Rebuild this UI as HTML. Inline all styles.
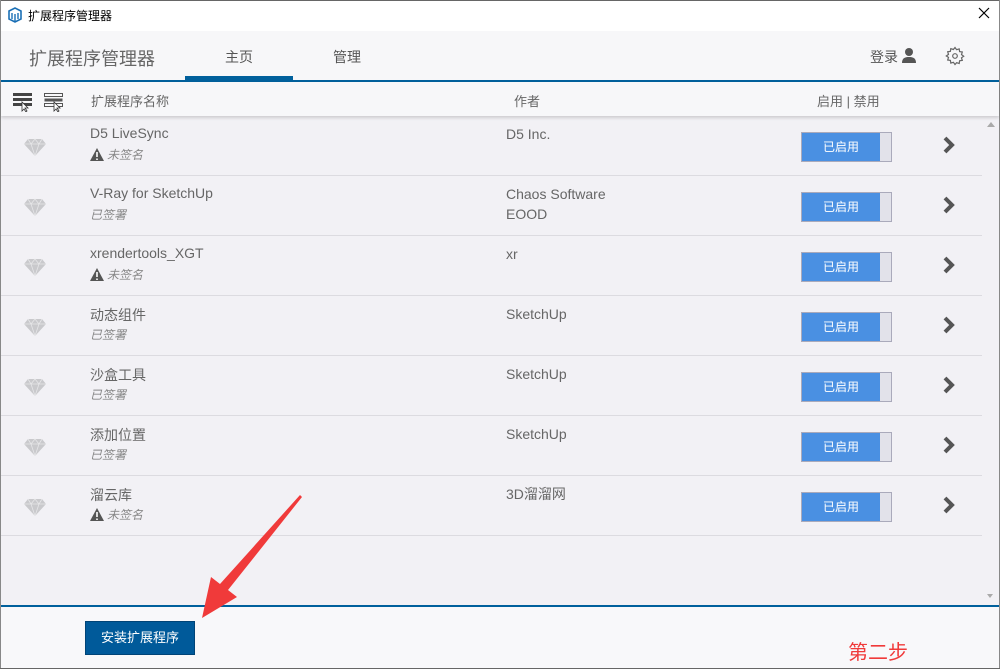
<!DOCTYPE html>
<html><head><meta charset="utf-8"><style>
*{margin:0;padding:0;box-sizing:border-box}
body{width:1000px;height:669px;overflow:hidden;font-family:"Liberation Sans","Noto Sans CJK SC",sans-serif;background:#fff;position:relative;color:#555}
.abs{position:absolute}
.row{position:absolute;left:1px;width:981px;height:60px;border-bottom:1px solid #dcdbe0}
.name{position:absolute;left:89px;top:9px;font-size:14px;color:#666}
.sub{position:absolute;left:89px;top:30px;font-size:12px;color:#888;font-style:italic}
.sub svg{vertical-align:-2px;margin-right:3px}
.auth{position:absolute;left:505px;top:8px;font-size:14px;color:#666;line-height:20px}
.tog{position:absolute;left:800px;top:16px;width:91px;height:30px;border:1px solid #aab;background:#e2e2ea}
.tog span{position:absolute;left:0;top:0;width:78px;height:28px;background:#4a90e2;color:#fff;font-size:12px;text-align:center;line-height:28px}
.gem{position:absolute;left:22px;top:22px}
.chev{position:absolute;left:941px;top:20px}
</style></head><body>
<div class="abs" style="left:0;top:0;width:1000px;height:1px;background:#666"></div>
<div class="abs" style="left:0;top:0;width:1px;height:669px;background:#888"></div>
<div class="abs" style="right:0;top:0;width:1px;height:669px;background:#888"></div>
<svg class="abs" style="left:7px;top:7px" width="16" height="16" viewBox="0 0 16 16"><path d="M2 4l6-3 6 3v8l-6 3-6-3z" fill="none" stroke="#1a6fb5" stroke-width="1.6"/><path d="M5 6v6M8 7v7M11 6v6" stroke="#1a6fb5" stroke-width="1.4"/></svg>
<div class="abs" style="left:28px;top:7px;font-size:12px;color:#000">扩展程序管理器</div>
<svg class="abs" style="left:978px;top:7px" width="12" height="12" viewBox="0 0 12 12"><path d="M1 1l10 10M11 1L1 11" stroke="#000" stroke-width="1.2"/></svg>
<div class="abs" style="left:1px;top:31px;width:998px;height:49px;background:#f7f7f9"></div>
<div class="abs" style="left:29px;top:45px;font-size:18px;color:#666">扩展程序管理器</div>
<div class="abs" style="left:225px;top:47px;font-size:14px;color:#555">主页</div>
<div class="abs" style="left:333px;top:47px;font-size:14px;color:#555">管理</div>
<div class="abs" style="left:185px;top:76px;width:108px;height:4px;background:#00609c"></div>
<div class="abs" style="left:870px;top:47px;font-size:14px;color:#555">登录</div>
<svg class="abs" style="left:901px;top:47px" width="16" height="16" viewBox="0 0 16 16"><circle cx="8" cy="5" r="4" fill="#555"/><path d="M1 16c0-5 3-6 7-6s7 1 7 6z" fill="#555"/></svg>
<svg class="abs" style="left:945px;top:46px" width="20" height="20" viewBox="0 0 20 20"><path d="M10 1.5l1.6 2.2 2.6-.8.4 2.7 2.7.4-.8 2.6 2.2 1.6-2.2 1.6.8 2.6-2.7.4-.4 2.7-2.6-.8L10 18.5l-1.6-2.2-2.6.8-.4-2.7-2.7-.4.8-2.6L1.3 10l2.2-1.6-.8-2.6 2.7-.4.4-2.7 2.6.8z" fill="none" stroke="#666" stroke-width="1.2"/><circle cx="10" cy="10" r="2.3" fill="none" stroke="#666" stroke-width="1.2"/></svg>
<div class="abs" style="left:1px;top:80px;width:998px;height:2px;background:#00609c"></div>
<div class="abs" style="left:1px;top:82px;width:998px;height:34px;background:#f7f7f9;box-shadow:0 2px 3px rgba(0,0,0,.15);z-index:2"></div>
<svg class="abs" style="left:13px;top:92px;z-index:3" width="22" height="20" viewBox="0 0 22 20"><rect x="0" y="1" width="19" height="3" fill="#444"/><rect x="0" y="6" width="19" height="3" fill="#444"/><rect x="0" y="11" width="19" height="3" fill="#444"/><path d="M9 10v9l2-2 2 3 1-1-2-3h3z" fill="#fff" stroke="#333" stroke-width=".8"/></svg>
<svg class="abs" style="left:44px;top:92px;z-index:3" width="22" height="20" viewBox="0 0 22 20"><rect x=".5" y="1.5" width="18" height="3" fill="none" stroke="#555"/><rect x=".5" y="6.5" width="18" height="3" fill="#555"/><rect x=".5" y="11.5" width="18" height="3" fill="none" stroke="#555"/><path d="M10 10v9l2-2 2 3 1-1-2-3h3z" fill="#fff" stroke="#333" stroke-width=".8"/></svg>
<div class="abs" style="left:91px;top:91px;font-size:13px;color:#666;z-index:3">扩展程序名称</div>
<div class="abs" style="left:514px;top:91px;font-size:13px;color:#666;z-index:3">作者</div>
<div class="abs" style="left:817px;top:91px;font-size:13px;color:#666;z-index:3">启用 | 禁用</div>
<div class="abs" style="left:1px;top:116px;width:998px;height:489px;background:#f2f1f5"></div>
<div class="abs" style="left:987px;top:122px;width:0;height:0;border-left:4px solid transparent;border-right:4px solid transparent;border-bottom:5px solid #aaa"></div>
<div class="abs" style="left:987px;top:594px;width:0;height:0;border-left:3px solid transparent;border-right:3px solid transparent;border-top:4px solid #aaa"></div>

<div class="row" style="top:116px">
<svg class="gem" width="24" height="18" viewBox="0 0 24 18"><path d="M5 1h14l4 5-11 12L1 6z" fill="#c9c9cc"/><path d="M1 6h22M5 1l3 5 4-5 4 5 3-5M8 6l4 12 4-12" fill="none" stroke="#e6e6e8" stroke-width=".8"/></svg>
<div class="name">D5 LiveSync</div><div class="sub"><svg width="14" height="13" viewBox="0 0 14 13"><path d="M7 0l7 13H0z" fill="#555"/><path d="M7 4v5M7 10.5v1.5" stroke="#fff" stroke-width="1.6"/></svg>未签名</div>
<div class="auth">D5 Inc.</div><div class="tog"><span>已启用</span></div>
<svg class="chev" width="14" height="18" viewBox="0 0 14 18"><path d="M3 2l7 7-7 7" fill="none" stroke="#555" stroke-width="4"/></svg></div>
<div class="row" style="top:176px">
<svg class="gem" width="24" height="18" viewBox="0 0 24 18"><path d="M5 1h14l4 5-11 12L1 6z" fill="#c9c9cc"/><path d="M1 6h22M5 1l3 5 4-5 4 5 3-5M8 6l4 12 4-12" fill="none" stroke="#e6e6e8" stroke-width=".8"/></svg>
<div class="name">V-Ray for SketchUp</div><div class="sub">已签署</div>
<div class="auth">Chaos Software<br>EOOD</div><div class="tog"><span>已启用</span></div>
<svg class="chev" width="14" height="18" viewBox="0 0 14 18"><path d="M3 2l7 7-7 7" fill="none" stroke="#555" stroke-width="4"/></svg></div>
<div class="row" style="top:236px">
<svg class="gem" width="24" height="18" viewBox="0 0 24 18"><path d="M5 1h14l4 5-11 12L1 6z" fill="#c9c9cc"/><path d="M1 6h22M5 1l3 5 4-5 4 5 3-5M8 6l4 12 4-12" fill="none" stroke="#e6e6e8" stroke-width=".8"/></svg>
<div class="name">xrendertools_XGT</div><div class="sub"><svg width="14" height="13" viewBox="0 0 14 13"><path d="M7 0l7 13H0z" fill="#555"/><path d="M7 4v5M7 10.5v1.5" stroke="#fff" stroke-width="1.6"/></svg>未签名</div>
<div class="auth">xr</div><div class="tog"><span>已启用</span></div>
<svg class="chev" width="14" height="18" viewBox="0 0 14 18"><path d="M3 2l7 7-7 7" fill="none" stroke="#555" stroke-width="4"/></svg></div>
<div class="row" style="top:296px">
<svg class="gem" width="24" height="18" viewBox="0 0 24 18"><path d="M5 1h14l4 5-11 12L1 6z" fill="#c9c9cc"/><path d="M1 6h22M5 1l3 5 4-5 4 5 3-5M8 6l4 12 4-12" fill="none" stroke="#e6e6e8" stroke-width=".8"/></svg>
<div class="name">动态组件</div><div class="sub">已签署</div>
<div class="auth">SketchUp</div><div class="tog"><span>已启用</span></div>
<svg class="chev" width="14" height="18" viewBox="0 0 14 18"><path d="M3 2l7 7-7 7" fill="none" stroke="#555" stroke-width="4"/></svg></div>
<div class="row" style="top:356px">
<svg class="gem" width="24" height="18" viewBox="0 0 24 18"><path d="M5 1h14l4 5-11 12L1 6z" fill="#c9c9cc"/><path d="M1 6h22M5 1l3 5 4-5 4 5 3-5M8 6l4 12 4-12" fill="none" stroke="#e6e6e8" stroke-width=".8"/></svg>
<div class="name">沙盒工具</div><div class="sub">已签署</div>
<div class="auth">SketchUp</div><div class="tog"><span>已启用</span></div>
<svg class="chev" width="14" height="18" viewBox="0 0 14 18"><path d="M3 2l7 7-7 7" fill="none" stroke="#555" stroke-width="4"/></svg></div>
<div class="row" style="top:416px">
<svg class="gem" width="24" height="18" viewBox="0 0 24 18"><path d="M5 1h14l4 5-11 12L1 6z" fill="#c9c9cc"/><path d="M1 6h22M5 1l3 5 4-5 4 5 3-5M8 6l4 12 4-12" fill="none" stroke="#e6e6e8" stroke-width=".8"/></svg>
<div class="name">添加位置</div><div class="sub">已签署</div>
<div class="auth">SketchUp</div><div class="tog"><span>已启用</span></div>
<svg class="chev" width="14" height="18" viewBox="0 0 14 18"><path d="M3 2l7 7-7 7" fill="none" stroke="#555" stroke-width="4"/></svg></div>
<div class="row" style="top:476px">
<svg class="gem" width="24" height="18" viewBox="0 0 24 18"><path d="M5 1h14l4 5-11 12L1 6z" fill="#c9c9cc"/><path d="M1 6h22M5 1l3 5 4-5 4 5 3-5M8 6l4 12 4-12" fill="none" stroke="#e6e6e8" stroke-width=".8"/></svg>
<div class="name">溜云库</div><div class="sub"><svg width="14" height="13" viewBox="0 0 14 13"><path d="M7 0l7 13H0z" fill="#555"/><path d="M7 4v5M7 10.5v1.5" stroke="#fff" stroke-width="1.6"/></svg>未签名</div>
<div class="auth">3D溜溜网</div><div class="tog"><span>已启用</span></div>
<svg class="chev" width="14" height="18" viewBox="0 0 14 18"><path d="M3 2l7 7-7 7" fill="none" stroke="#555" stroke-width="4"/></svg></div>

<div class="abs" style="left:1px;top:605px;width:998px;height:2px;background:#00609c"></div>
<div class="abs" style="left:1px;top:607px;width:998px;height:61px;background:#f8f8fa"></div>
<div class="abs" style="left:85px;top:621px;width:110px;height:34px;background:#005a9a;border:1px solid #004477;color:#fff;font-size:13px;text-align:center;line-height:32px">安装扩展程序</div>
<div class="abs" style="left:848px;top:636px;font-size:20px;color:#f03a3a">第二步</div>
<div class="abs" style="left:0;top:668px;width:1000px;height:1px;background:#666"></div>
<svg class="abs" style="left:195px;top:490px;z-index:5" width="110" height="135" viewBox="0 0 110 135"><path d="M107 7L33 100l9 7L7 128 16 87l9 7L105 5z" fill="#f03a3a"/></svg>
</body></html>
